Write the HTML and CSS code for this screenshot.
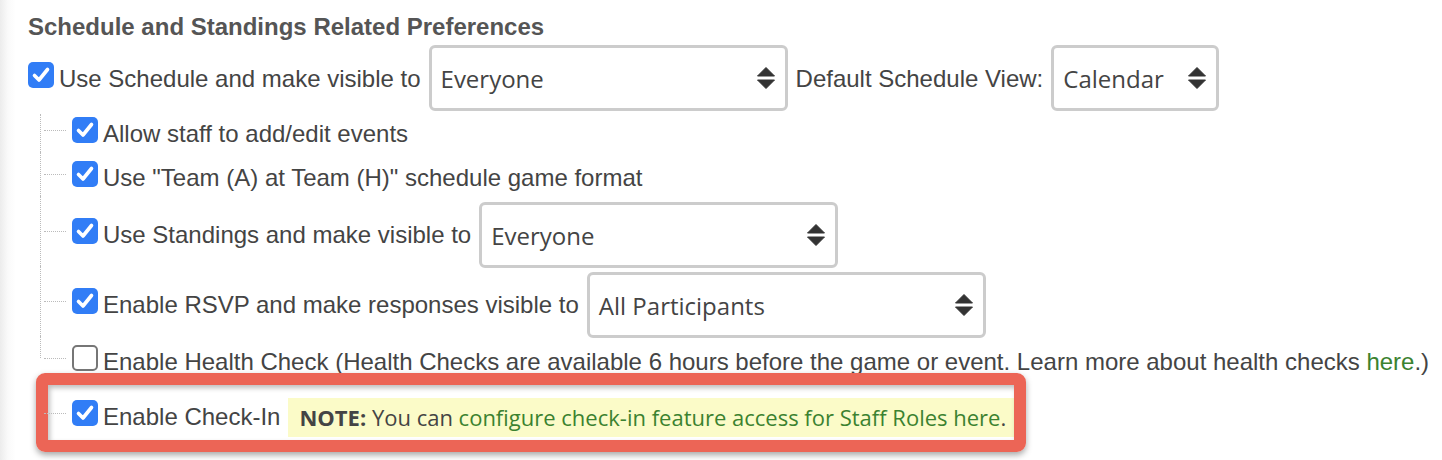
FILE: index.html
```html
<!DOCTYPE html>
<html lang="en">
<head>
  <meta charset="UTF-8">
  <meta name="viewport" content="width=device-width, initial-scale=1.0">
  <title>Schedule and Standings Preferences</title>
  <link rel="stylesheet" href="styles.css">
</head>
<body>
  <div class="prefs">
    <h2 class="prefs-title">Schedule and Standings Related Preferences</h2>

    <div class="row">
      <span class="check on"><svg viewBox="0 0 26 26"><path d="M6.5 13.5 L11 18 L19.5 7.5"/></svg></span>
      <span class="label">Use Schedule and make visible to</span>
      <div class="select select-wide">
        <span>Everyone</span>
        <svg class="arrows" viewBox="0 0 18 22"><path d="M9 0.5 L17.5 9 H0.5 Z M0.5 13 H17.5 L9 21.5 Z"/></svg>
      </div>
      <span class="label label-view">Default Schedule View:</span>
      <div class="select select-small">
        <span>Calendar</span>
        <svg class="arrows" viewBox="0 0 18 22"><path d="M9 0.5 L17.5 9 H0.5 Z M0.5 13 H17.5 L9 21.5 Z"/></svg>
      </div>
    </div>

    <ul class="tree">
      <li>
        <span class="check on"><svg viewBox="0 0 26 26"><path d="M6.5 13.5 L11 18 L19.5 7.5"/></svg></span>
        <span class="label">Allow staff to add/edit events</span>
      </li>
      <li>
        <span class="check on"><svg viewBox="0 0 26 26"><path d="M6.5 13.5 L11 18 L19.5 7.5"/></svg></span>
        <span class="label">Use "Team (A) at Team (H)" schedule game format</span>
      </li>
      <li class="tall">
        <span class="check on"><svg viewBox="0 0 26 26"><path d="M6.5 13.5 L11 18 L19.5 7.5"/></svg></span>
        <span class="label">Use Standings and make visible to</span>
        <div class="select select-wide">
          <span>Everyone</span>
          <svg class="arrows" viewBox="0 0 18 22"><path d="M9 0.5 L17.5 9 H0.5 Z M0.5 13 H17.5 L9 21.5 Z"/></svg>
        </div>
      </li>
      <li class="tall">
        <span class="check on"><svg viewBox="0 0 26 26"><path d="M6.5 13.5 L11 18 L19.5 7.5"/></svg></span>
        <span class="label">Enable RSVP and make responses visible to</span>
        <div class="select select-part">
          <span>All Participants</span>
          <svg class="arrows" viewBox="0 0 18 22"><path d="M9 0.5 L17.5 9 H0.5 Z M0.5 13 H17.5 L9 21.5 Z"/></svg>
        </div>
      </li>
      <li class="end">
        <span class="check"></span>
        <span class="label">Enable Health Check (Health Checks are available 6 hours before the game or event. Learn more about health checks <a href="#" class="link">here</a>.)</span>
      </li>
      <li class="highlight">
        <span class="check on"><svg viewBox="0 0 26 26"><path d="M6.5 13.5 L11 18 L19.5 7.5"/></svg></span>
        <span class="label">Enable Check-In</span>
        <span class="note"><b>NOTE:</b> You can <a href="#" class="link">configure check-in feature access for Staff Roles here</a>.</span>
        <span class="callout"></span>
      </li>
    </ul>
  </div>
</body>
</html>
```

FILE: styles.css
```css
body {
  margin: 0;
  font-family: "Liberation Sans", Arial, Helvetica, sans-serif;
  color: #444;
  background: linear-gradient(to right, #ececec, #fafafa 8px, #fff 16px);
  min-height: 100vh;
}
.prefs {
  padding: 13px 0 0 28px;
}
.prefs-title {
  margin: 0 0 2px;
  font-size: 24px;
  line-height: 27px;
  font-weight: 700;
  color: #555;
}
.row {
  display: flex;
  align-items: center;
  height: 66px;
}
.row .select {
  margin-top: 6px;
}
.label {
  margin-top: 8px;
  font-size: 24px;
  white-space: nowrap;
}
.label-view {
  margin-left: 8px;
}
.check {
  flex: none;
  width: 26px;
  height: 26px;
  box-sizing: border-box;
  margin-right: 5px;
  border: 2px solid #767676;
  border-radius: 5px;
  background: #fff;
}
.check.on {
  border: none;
  background: #317df6;
}
.check svg {
  display: block;
  width: 26px;
  height: 26px;
  fill: none;
  stroke: #fff;
  stroke-width: 3.6;
  stroke-linecap: round;
  stroke-linejoin: round;
}
.select {
  flex: none;
  display: flex;
  align-items: center;
  justify-content: space-between;
  box-sizing: border-box;
  height: 66px;
  margin-left: 8px;
  padding: 0 10px 0 9px;
  border: 3px solid #ccc;
  border-radius: 6px;
  background: #fff;
  font-family: "Open Sans", sans-serif;
  font-size: 24px;
  color: #444;
}
.select-wide {
  width: 359px;
}
.select-small {
  width: 168px;
}
.select-part {
  width: 399px;
}
.arrows {
  width: 18px;
  height: 22px;
  fill: #333;
  stroke: #333;
  stroke-width: 1;
  stroke-linejoin: round;
}
.tree {
  list-style: none;
  margin: 0 0 0 12px;
  padding: 0;
}
.tree li {
  position: relative;
  display: flex;
  align-items: center;
  height: 44px;
  padding-left: 32px;
}
.tree li.tall {
  height: 70px;
}
.tree li.tall .select {
  margin-top: 8px;
}
.tree li::before {
  content: "";
  position: absolute;
  left: 0;
  top: 0;
  bottom: 0;
  border-left: 1px dotted #bbb;
}
.tree li:first-child::before {
  top: 6px;
}
.tree li.end::before {
  bottom: 50%;
}
.tree li::after {
  content: "";
  position: absolute;
  left: 4px;
  top: 50%;
  width: 22px;
  border-top: 1px dotted #bbb;
}
.tree li.highlight {
  height: 66px;
}
.tree li.highlight::before {
  display: none;
}
.link {
  color: #3b8230;
  text-decoration: none;
}
.note {
  margin: 8px 0 0 8px;
  padding: 0 10px 0 11px;
  line-height: 39px;
  background: #fbfbc8;
  font-family: "Open Sans", sans-serif;
  font-size: 22px;
  color: #444;
  white-space: nowrap;
}
.note b {
  font-weight: 700;
}
.callout {
  position: absolute;
  left: -4px;
  top: -7px;
  width: 990px;
  height: 79px;
  box-sizing: border-box;
  border: 12px solid #ec6556;
  border-radius: 9px;
  box-shadow: 0 3px 6px rgba(0, 0, 0, 0.35), inset 2px 3px 5px rgba(0, 0, 0, 0.25);
  pointer-events: none;
}
```
